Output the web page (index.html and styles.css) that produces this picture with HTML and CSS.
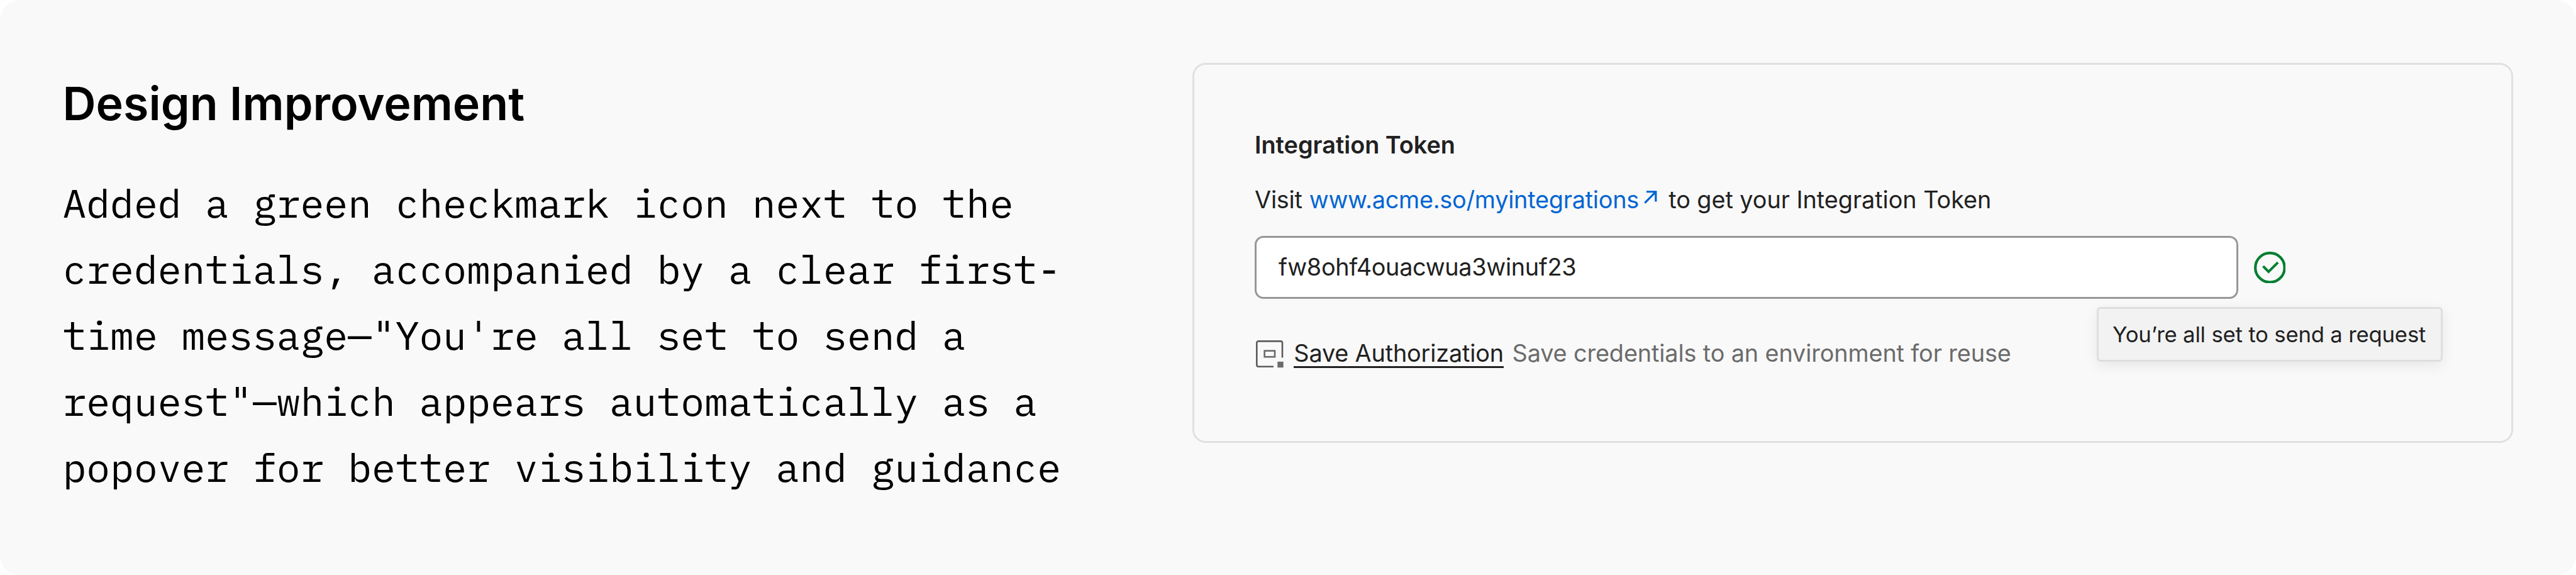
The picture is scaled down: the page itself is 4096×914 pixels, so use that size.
FILE: index.html
```
<!DOCTYPE html>
<html lang="en">
<head>
<meta charset="utf-8">
<title>Design Improvement</title>
<link rel="stylesheet" href="styles.css">
</head>
<body>
<main class="panel">
  <section class="copy">
    <h1 class="title">Design Improvement</h1>
    <p class="description">Added a green checkmark icon next to the<br>credentials, accompanied by a clear first-<br>time message—"You're all set to send a<br>request"—which appears automatically as a<br>popover for better visibility and guidance</p>
  </section>
  <section class="card">
    <h2 class="label">Integration Token</h2>
    <p class="hint"><span class="before">Visit</span><a class="link">www.acme.so/myintegrations</a><svg class="external" viewBox="0 0 24 24"><path d="M4.5 2H21.5V20M21.2 2.3L1.5 22.3" fill="none" stroke="currentColor" stroke-width="3.7"/></svg><span class="after">to get your Integration Token</span></p>
    <div class="field-row">
      <div class="field"><span class="value">fw8ohf4ouacwua3winuf23</span></div>
      <svg class="check" viewBox="0 0 58 58"><circle cx="29" cy="29" r="26.6" fill="none" stroke="currentColor" stroke-width="4.8"/><path d="M16.5 26.5L26.5 36.5L43.5 19.5" fill="none" stroke="currentColor" stroke-width="4.6"/></svg>
      <div class="tooltip" role="tooltip">You’re all set to send a request</div>
    </div>
    <div class="save-row">
      <svg class="vault" viewBox="0 0 50 50"><path d="M32 47.7H4.5a3 3 0 0 1-3-3V4.5a3 3 0 0 1 3-3H45a3 3 0 0 1 3 3V31.5" fill="none" stroke="#5c5c5c" stroke-width="3"/><rect x="15.6" y="19" width="18.7" height="11" fill="none" stroke="#6b6b6b" stroke-width="3"/><rect x="39.2" y="38.7" width="10.7" height="10.7" fill="#6b6b6b"/></svg>
      <a class="save">Save Authorization</a>
      <span class="note">Save credentials to an environment for reuse</span>
    </div>
  </section>
</main>
</body>
</html>
```
FILE: styles.css
```
* { box-sizing: border-box; }

body {
  margin: 0;
  background: #fff;
  font-family: Inter, "Liberation Sans", sans-serif;
  color: #212121;
}

h1, h2, p { margin: 0; }

.panel {
  display: flex;
  align-items: flex-start;
  width: 4096px;
  height: 914px;
  padding: 99.75px 100px 0 99.5px;
  border-radius: 31.5px;
  background: #f9f9f9;
}

.copy {
  flex: none;
  width: 1796.5px;
  padding-top: 20.25px;
  color: #000;
}

.title {
  font-size: 73.5px;
  font-weight: 600;
  line-height: 90px;
}

.description {
  margin-top: 60px;
  font-family: "IBM Plex Mono", "Liberation Mono", monospace;
  font-size: 63px;
  line-height: 105px;
  white-space: nowrap;
}

.card {
  flex: none;
  width: 2100px;
  height: 603.75px;
  padding: 103px 96px 0;
  border: 3px solid #e0e0e0;
  border-radius: 21px;
  font-size: 37.8px;
  line-height: 48px;
  white-space: nowrap;
}

.label {
  font-size: 37.8px;
  font-weight: 600;
  line-height: 48px;
}

.hint {
  display: flex;
  margin-top: 39.5px;
}

.before { letter-spacing: -.2px; }

.link {
  margin-left: 11px;
  color: #0265d2;
  letter-spacing: -.235px;
}

.external {
  width: 21px;
  height: 21px;
  margin: 9.75px 0 0 7.7px;
  color: #0265d2;
}

.after {
  margin-left: 18.5px;
  letter-spacing: -.05px;
}

.field-row {
  position: relative;
  display: flex;
  align-items: center;
  gap: 25px;
  margin-top: 34px;
}

.field {
  display: flex;
  align-items: center;
  width: 1563.5px;
  height: 99.5px;
  padding: 0 35px 3px;
  border: 3px solid #979797;
  border-radius: 14px;
  background: #fff;
}

.value { letter-spacing: -.31px; }

.check {
  width: 50.75px;
  height: 50.75px;
  color: #007f31;
}

.tooltip {
  position: absolute;
  left: 1339px;
  top: 112.25px;
  display: flex;
  align-items: center;
  width: 550px;
  height: 87px;
  padding: 0 22px;
  border: 3px solid #dedede;
  border-radius: 6px;
  background: #f2f2f2;
  box-shadow: 0 6px 22px rgba(0, 0, 0, .08);
  font-size: 34.65px;
  letter-spacing: -.17px;
}

.save-row {
  display: flex;
  align-items: flex-start;
  margin-top: 62.5px;
}

.vault {
  width: 43.75px;
  height: 43.75px;
  margin: 3.75px 0 0 2.4px;
}

.save {
  height: 48px;
  margin-left: 16.2px;
  border-bottom: 3px solid #212121;
  letter-spacing: -.167px;
}

.note {
  margin-left: 13.7px;
  color: #6b6b6b;
  letter-spacing: -.12px;
}
```
